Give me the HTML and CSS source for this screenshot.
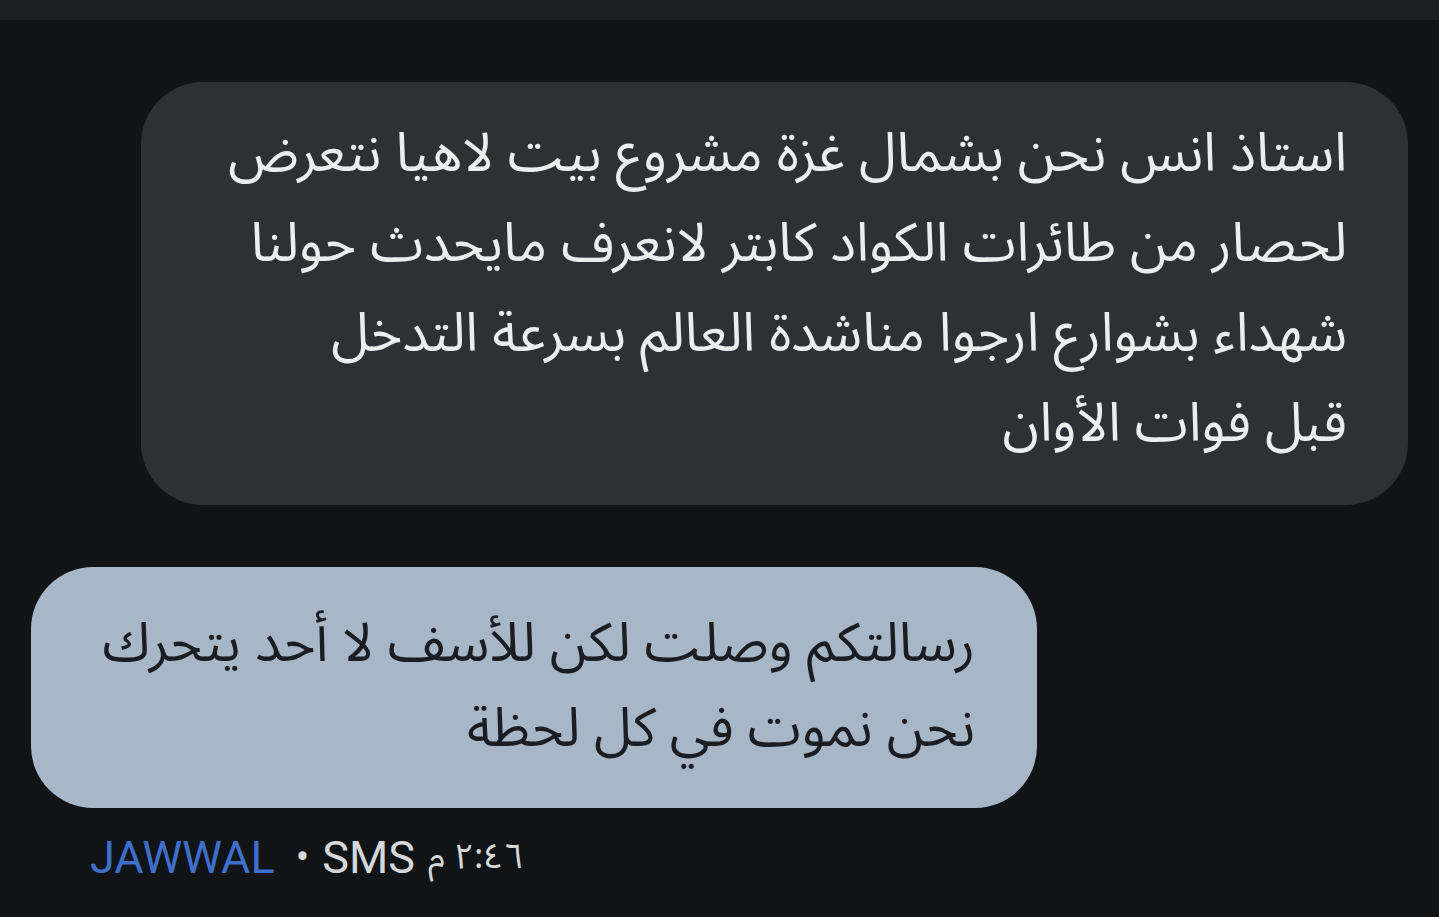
FILE: index.html
```html
<!DOCTYPE html>
<html lang="ar" dir="rtl">
<head>
  <meta charset="UTF-8">
  <title>رسائل</title>
  <link rel="stylesheet" href="styles.css">
</head>
<body>

  <!-- Top bar -->
  <div class="top-bar"></div>

  <!-- Conversation -->
  <div class="thread">
    <div class="bubble sent">
      استاذ انس نحن بشمال غزة مشروع بيت لاهيا نتعرض<br>
      لحصار من طائرات الكواد كابتر لانعرف مايحدث حولنا<br>
      شهداء بشوارع ارجوا مناشدة العالم بسرعة التدخل<br>
      قبل فوات الأوان
    </div>

    <div class="bubble received">
      رسالتكم وصلت لكن للأسف لا أحد يتحرك<br>
      نحن نموت في كل لحظة
    </div>

    <div class="meta" dir="ltr">
      <span class="sender">JAWWAL</span>
      <span class="dot">•</span>
      <span>SMS</span>
      <span class="time" dir="rtl">٢:٤٦ م</span>
    </div>
  </div>

</body>
</html>
```

FILE: styles.css
```css
body {
  margin: 0;
  height: 917px;
  background-color: #101417;
  font-family: "Noto Sans Arabic", "Noto Sans", "DejaVu Sans", sans-serif;
  overflow: hidden;
}
.top-bar {
  height: 20px;
  background-color: #1c1f22;
}
.thread {
  display: flex;
  flex-direction: column;
  padding: 62px 31px 0 31px;
}
.bubble {
  font-size: 54px;
  line-height: 90px;
  white-space: nowrap;
  border-radius: 62px;
}
.sent {
  align-self: flex-start;
  width: 1267px;
  box-sizing: border-box;
  padding: 27px 61px 36px 0;
  background-color: #2e3134;
  color: #eceded;
}
.received {
  align-self: flex-end;
  width: 1006px;
  box-sizing: border-box;
  margin-top: 62px;
  padding: 35px 62px 36px 0;
  background-color: #a8b7c7;
  color: #1a1e23;
  line-height: 85px;
}
.meta {
  display: flex;
  align-items: center;
  gap: 13px;
  align-self: flex-end;
  margin: 12px 0 0 0;
  padding-left: 59px;
  width: 1008px;
  font-family: Roboto, "Liberation Sans", sans-serif;
  font-size: 45px;
  color: #d6d7d8;
}
.sender {
  color: #3e6fcb;
}
.dot {
  margin-left: 8px;
  font-size: 40px;
}
.time {
  font-family: "Noto Sans Arabic", "DejaVu Sans", sans-serif;
  font-size: 35px;
}
```
